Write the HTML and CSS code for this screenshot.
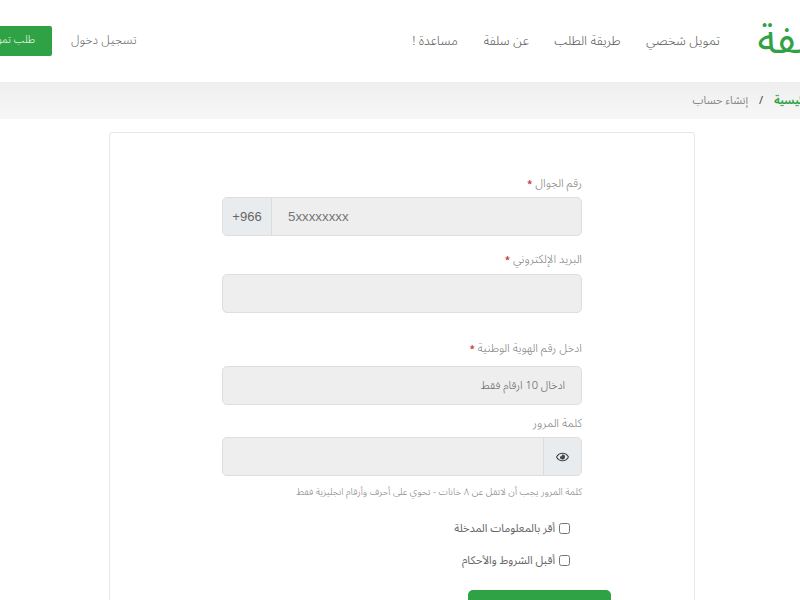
FILE: index.html
```html
<!DOCTYPE html>
<html lang="ar" dir="rtl">
<head>
<meta charset="utf-8">
<title>إنشاء حساب</title>
<link rel="stylesheet" href="styles.css">
</head>
<body>
<div class="page">
  <header class="topbar">
    <a class="logo">سلفة</a>
    <nav class="nav">
      <a>تمويل شخصي</a>
      <a>طريقة الطلب</a>
      <a>عن سلفة</a>
      <a>مساعدة !</a>
    </nav>
    <div class="actions">
      <a class="login">تسجيل دخول</a>
      <a class="cta">طلب تمويل</a>
    </div>
  </header>
  <div class="crumbs">
    <a class="crumb-home">الرئيسية</a>
    <span class="crumb-sep">/</span>
    <span class="crumb-here">إنشاء حساب</span>
  </div>
  <main class="card">
    <form class="form">
      <label class="label first">رقم الجوال <b>*</b></label>
      <div class="group ltr">
        <span class="addon addon-start">+966</span>
        <input class="control" type="text" placeholder="5xxxxxxxx">
      </div>
      <label class="label second">البريد الإلكتروني <b>*</b></label>
      <div class="group"><input class="control" type="text"></div>
      <label class="label third">ادخل رقم الهوية الوطنية <b>*</b></label>
      <div class="group"><input class="control rtl-control" type="text" placeholder="ادخال 10 ارقام فقط"></div>
      <label class="label fourth">كلمة المرور</label>
      <div class="group ltr">
        <input class="control" type="password">
        <span class="addon addon-end">
          <svg class="eye" viewBox="0 0 576 512" aria-hidden="true"><path d="M288 144a110.900 110.900 0 0 0-31.200 5 55.400 55.400 0 0 1 7.200 27 56 56 0 0 1-56 56 55.400 55.400 0 0 1-27-7.200A111.700 111.700 0 1 0 288 144zm284.500 97.400C518.300 135.600 410.900 64 288 64S57.700 135.600 3.500 241.400a32.400 32.400 0 0 0 0 29.200C57.700 376.400 165.100 448 288 448s230.300-71.600 284.500-177.400a32.400 32.400 0 0 0 0-29.200zM288 400c-98.700 0-189.100-55-237.900-144C98.900 167 189.300 112 288 112s189.100 55 237.900 144C477.100 345 386.700 400 288 400z"/></svg>
        </span>
      </div>
      <p class="hint">كلمة المرور يجب أن لاتقل عن ٨ خانات - تحوي على أحرف وأرقام انجليزية فقط</p>
      <label class="check"><input type="checkbox"> أقر بالمعلومات المدخلة</label>
      <label class="check"><input type="checkbox"> أقبل الشروط والأحكام</label>
      <div class="submit-row"><button class="submit" type="button">إنشاء حساب</button></div>
    </form>
  </main>
</div>
</body>
</html>
```
FILE: styles.css
```css
* { box-sizing: border-box; }
html, body { margin: 0; height: 600px; overflow: hidden; background: #fff; }
body { font-family: "Noto Sans Arabic", "DejaVu Sans", "Noto Sans", sans-serif; color: #666; font-weight: 300; }
.page { width: 880px; margin-right: -40px; height: 600px; overflow: hidden; }

.topbar { height: 82px; display: flex; align-items: center; }
.logo { width: 120px; flex: none; font-size: 40px; line-height: 82px; color: #2ea245; font-weight: 400; white-space: nowrap; }
.nav { display: flex; gap: 25.500px; font-size: 13px; color: #555; }
.nav a { white-space: nowrap; }
.actions { display: flex; align-items: center; gap: 19px; margin-right: auto; }
.login { font-size: 12.500px; color: #666; white-space: nowrap; margin-top: -2px; }
.cta { width: 92px; height: 30px; padding-right: 17px; background: #2ea245; color: #fff; font-size: 10.500px; line-height: 29px; border-radius: 2px; text-align: right; white-space: nowrap; overflow: hidden; }

.crumbs { height: 37px; background: linear-gradient(#efefef, #f7f7f7); display: flex; align-items: center; gap: 11px; padding-right: 27px; font-size: 11px; white-space: nowrap; }
.crumb-home { color: #2ea245; font-size: 10.500px; font-weight: 700; }
.crumb-sep { color: #444; font-weight: 400; }
.crumb-here { color: #888; font-weight: 400; }

.card { width: 586px; margin: 13px 145px 0 0; height: 560px; border: 1px solid #e6e6e6; border-radius: 3px; padding-top: 40px; background: #fff; }
.form { width: 360px; margin-right: 112px; }
.label { display: block; font-size: 11.500px; line-height: 20px; color: #777; text-align: right; }
.label b { color: #c33; font-size: 9px; line-height: 0; font-weight: 700; }
.second { margin-top: 13px; margin-bottom: 5px; }
.third { margin-top: 25px; margin-bottom: 8px; }
.fourth { margin-top: 8px; }
.group { display: flex; height: 39px; margin-top: 4px; border: 1px solid #dedede; border-radius: 5px; background: #eee; overflow: hidden; }
.ltr { direction: ltr; }
.control { flex: 1; min-width: 0; height: 100%; border: 0; background: transparent; padding: 0 16px; font: 13.300px "Liberation Sans", sans-serif; color: #555; outline: 0; }
.control::placeholder { color: #757575; opacity: 1; }
.rtl-control { direction: rtl; font-family: "Noto Sans Arabic", "DejaVu Sans", sans-serif; font-size: 11px; font-weight: 300; }
.rtl-control::placeholder { color: #555; }
.addon { flex: none; display: flex; align-items: center; justify-content: center; background: #e9ecef; font: 13px "Liberation Sans", sans-serif; color: #666; }
.addon-start { width: 49px; border-right: 1px solid #dcdcdc; }
.addon-end { width: 38px; border-left: 1px solid #dcdcdc; }
.eye { width: 13px; height: 12px; fill: #444; }
.hint { margin: 9px 0 0; font-size: 9.600px; line-height: 14px; color: #777; text-align: right; white-space: nowrap; }
.check { display: flex; align-items: center; gap: 4px; height: 32px; margin-right: 12px; font-size: 11.100px; color: #666; font-weight: 400; white-space: nowrap; }
.hint + .check { margin-top: 13px; }
.check input { width: 11px; height: 11px; margin: 0; flex: none; }
.submit-row { display: flex; margin-top: 14px; margin-right: -29px; }
.submit { width: 143px; height: 40px; background: #2ea245; border: 0; border-radius: 5px; color: #fff; font: inherit; font-size: 12px; }
```
